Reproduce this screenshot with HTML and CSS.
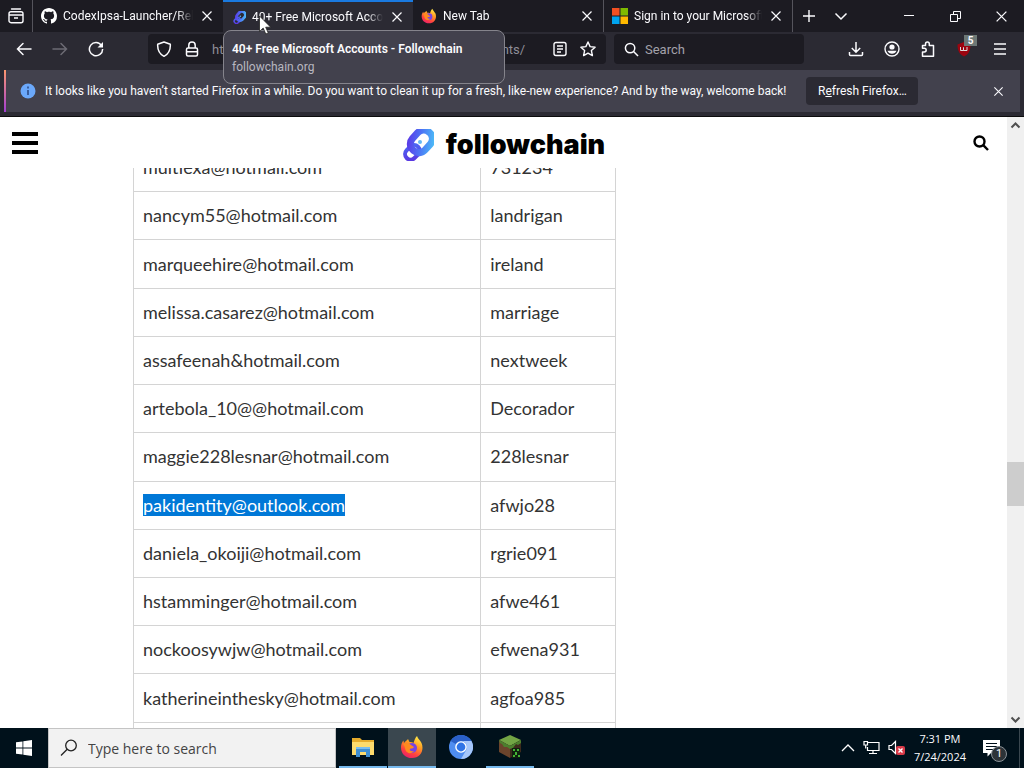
FILE: index.html
```html
<!DOCTYPE html>
<html lang="en">
<head>
    <meta charset="UTF-8">
    <meta name="viewport" content="width=device-width, initial-scale=1.0">
    <title>40+ Free Microsoft Accounts - Followchain</title>
    <link rel="stylesheet" href="styles.css">
</head>
<body>
    <!-- Shared icons -->
    <svg class="defs" width="0" height="0" aria-hidden="true">
        <defs>
            <linearGradient id="chainFill" x1="0" y1="1" x2="1" y2="0">
                <stop offset="0" stop-color="#5a35e0"/>
                <stop offset="1" stop-color="#4a6af5"/>
            </linearGradient>
            <linearGradient id="linkFill" x1="0" y1="0" x2="1" y2="1">
                <stop offset="0" stop-color="#5a3be8"/>
                <stop offset="0.5" stop-color="#4c78f5"/>
                <stop offset="1" stop-color="#4cc0f7"/>
            </linearGradient>
            <linearGradient id="foxFill" x1="0.8" y1="0" x2="0.3" y2="1">
                <stop offset="0" stop-color="#fff04a"/>
                <stop offset="0.4" stop-color="#ff9a22"/>
                <stop offset="0.75" stop-color="#ff4040"/>
                <stop offset="1" stop-color="#e8206a"/>
            </linearGradient>
            <symbol id="chain" viewBox="0 0 32 32">
                <rect x="2" y="18" width="16" height="11" rx="5.500" transform="rotate(-45 10 23)" fill="none" stroke="url(#chainFill)" stroke-width="4"/>
                <rect x="7" y="4" width="24" height="17" rx="8" transform="rotate(-48 19 12)" fill="none" stroke="url(#linkFill)" stroke-width="7"/>
                <circle cx="18" cy="13" r="2" fill="#62b8f5"/>
            </symbol>
            <symbol id="fox" viewBox="0 0 24 24">
                <path d="M17 1c1 3 3 4 4.500 7 3 7-1 15-9.500 15C5 23 .8 18 1 12c.1-3 1.200-5 2.400-6.500L4 8c1.500-2 3-2.500 4-4l1.500 3c2 0 3 0 4 1 1-3 1.500-5 3.500-7z" fill="url(#foxFill)"/>
                <circle cx="12" cy="13" r="5" fill="#7543e5"/>
                <path d="M3 9c3-1 6-1 8 1 1 1 2 1 3 2-1 2-3 1-4 2s1 3 4 2c-2 3-7 3-8.500-1C4.700 12.500 5 11 3 9z" fill="#ff8a1e"/>
            </symbol>
            <symbol id="cross" viewBox="0 0 12 12">
                <path d="M1.500 1.500l9 9M10.500 1.500l-9 9" fill="none" stroke="currentColor" stroke-width="1.200"/>
            </symbol>
        </defs>
    </svg>

    <!-- Tab strip -->
    <div class="tabs">
        <button class="tabs-view" aria-label="Firefox View">
            <svg width="16" height="16" viewBox="0 0 16 16" fill="none" stroke="currentColor" stroke-width="1.400"><path d="M3.500 1h9" stroke-linecap="round"/><rect x="1" y="3.700" width="14" height="11" rx="2"/><path d="M1 7h14M6 10h4"/></svg>
        </button>
        <div class="tab">
            <svg class="tab-icon" viewBox="0 0 16 16"><path fill="#fff" d="M8 0C3.580 0 0 3.580 0 8c0 3.540 2.290 6.530 5.470 7.590.4.070.55-.17.55-.38 0-.19-.01-.82-.01-1.490-2.010.37-2.530-.49-2.690-.94-.09-.23-.48-.94-.82-1.130-.28-.15-.68-.52-.01-.53.63-.01 1.080.58 1.230.82.72 1.210 1.870.87 2.330.66.070-.52.28-.87.51-1.070-1.780-.2-3.640-.89-3.640-3.950 0-.87.31-1.590.82-2.150-.08-.2-.36-1.020.080-2.120 0 0 .67-.21 2.200.82.64-.18 1.320-.27 2-.27s1.360.09 2 .27c1.530-1.040 2.200-.82 2.200-.82.44 1.100.16 1.920.08 2.120.51.56.82 1.270.82 2.150 0 3.070-1.870 3.750-3.650 3.950.29.25.54.73.54 1.480 0 1.070-.01 1.930-.01 2.200 0 .21.15.46.55.38A8.010 8.010 0 0 0 16 8c0-4.420-3.580-8-8-8z"/></svg>
            <span class="tab-title">CodexIpsa-Launcher/Releases</span>
            <button class="tab-close" aria-label="Close tab"><svg width="12" height="12"><use href="#cross"/></svg></button>
        </div>
        <div class="tab active">
            <svg class="tab-icon small"><use href="#chain"/></svg>
            <span class="tab-title">40+ Free Microsoft Accounts</span>
            <button class="tab-close" aria-label="Close tab"><svg width="12" height="12"><use href="#cross"/></svg></button>
        </div>
        <div class="tab">
            <svg class="tab-icon"><use href="#fox"/></svg>
            <span class="tab-title">New Tab</span>
            <button class="tab-close" aria-label="Close tab"><svg width="12" height="12"><use href="#cross"/></svg></button>
        </div>
        <div class="tab last">
            <svg class="tab-icon" viewBox="0 0 16 16"><path fill="#f25022" d="M0 0h7.500v7.500H0z"/><path fill="#7fba00" d="M8.500 0H16v7.500H8.500z"/><path fill="#00a4ef" d="M0 8.500h7.500V16H0z"/><path fill="#ffb900" d="M8.500 8.500H16V16H8.500z"/></svg>
            <span class="tab-title">Sign in to your Microsoft account</span>
            <button class="tab-close" aria-label="Close tab"><svg width="12" height="12"><use href="#cross"/></svg></button>
        </div>
        <button class="tabs-button" aria-label="New tab"><svg width="14" height="14" viewBox="0 0 14 14" stroke="currentColor" stroke-width="1.400"><path d="M7 1v12M1 7h12"/></svg></button>
        <button class="tabs-button" aria-label="List all tabs"><svg width="14" height="14" viewBox="0 0 14 14" fill="none" stroke="currentColor" stroke-width="1.500"><path d="M1.500 4.500L7 10l5.500-5.500"/></svg></button>
        <div class="window-buttons">
            <button aria-label="Minimize"><svg width="10" height="10" viewBox="0 0 10 10" stroke="currentColor"><path d="M0 4.500h10"/></svg></button>
            <button aria-label="Restore"><svg width="11" height="11" viewBox="0 0 11 11" fill="none" stroke="currentColor"><path d="M.5 3.500h7v7h-7zM3.500 3V.5h7v7H8"/></svg></button>
            <button aria-label="Close"><svg width="13" height="13"><use href="#cross"/></svg></button>
        </div>

        <!-- Tab preview, hangs over the toolbar -->
        <div class="tab-preview">
            <strong>40+ Free Microsoft Accounts - Followchain</strong>
            <span>followchain.org</span>
        </div>
        <svg class="cursor" width="13" height="20" viewBox="0 0 13 20"><path d="M.5 1v15.500l3.700-3.400 2.600 5.900 2.500-1.100-2.600-5.700h5z" fill="#fff" stroke="#222" stroke-width=".8"/></svg>
    </div>

    <!-- Navigation toolbar -->
    <div class="toolbar">
        <button aria-label="Back"><svg width="16" height="16" viewBox="0 0 16 16" fill="none" stroke="currentColor" stroke-width="1.500" stroke-linecap="round"><path d="M15 8H1.500M7 2.500L1.500 8 7 13.500"/></svg></button>
        <button class="dim" aria-label="Forward"><svg width="16" height="16" viewBox="0 0 16 16" fill="none" stroke="currentColor" stroke-width="1.500" stroke-linecap="round"><path d="M1 8h13.500M9 2.500L14.500 8 9 13.500"/></svg></button>
        <button aria-label="Reload"><svg width="16" height="16" viewBox="0 0 16 16" fill="none" stroke="currentColor" stroke-width="1.500"><path d="M13.500 4.500A6.600 6.600 0 1 0 14.600 8"/><path d="M15 1v5.500H9.500z" fill="currentColor" stroke="none"/></svg></button>
        <div class="url-box">
            <svg width="16" height="16" viewBox="0 0 16 16" fill="none" stroke="currentColor" stroke-width="1.500"><path d="M8 1l6.300 2.300c.3 5-1.300 9.400-6.300 12C3 12.700 1.400 8.300 1.700 3.300z" stroke-linejoin="round"/></svg>
            <svg width="16" height="16" viewBox="0 0 16 16" fill="none" stroke="currentColor" stroke-width="1.500"><rect x="2.500" y="7" width="11" height="8" rx="1.500"/><path d="M4.800 7V4.300a3.200 3.200 0 0 1 6.400 0V7M3 10.800h10"/></svg>
            <input type="text" aria-label="Address" value="https://www.followchain.org/free-microsoft-accounts/">
            <svg width="16" height="16" viewBox="0 0 16 16" fill="none" stroke="currentColor" stroke-width="1.400"><rect x="2" y="1.500" width="12" height="13" rx="2"/><path d="M5 5h6M5 8h6M5 11h4"/></svg>
            <svg width="16" height="16" viewBox="0 0 16 16" fill="none" stroke="currentColor" stroke-width="1.400" stroke-linejoin="round"><path d="M8 1l2.100 4.600 5 .6-3.700 3.400 1 5L8 12.100l-4.400 2.500 1-5L.9 6.200l5-.6z"/></svg>
        </div>
        <div class="search-box">
            <svg width="15" height="15" viewBox="0 0 16 16" fill="none" stroke="currentColor" stroke-width="1.600"><circle cx="6.500" cy="6.500" r="5"/><path d="M10.200 10.200L15 15"/></svg>
            <input type="text" aria-label="Search the web" placeholder="Search">
        </div>
        <div class="toolbar-actions">
            <button aria-label="Downloads"><svg width="16" height="16" viewBox="0 0 16 16" fill="none" stroke="currentColor" stroke-width="1.500"><path d="M8 1v10M3.800 7L8 11.200 12.200 7M1.500 11v2.500a1 1 0 0 0 1 1h11a1 1 0 0 0 1-1V11"/></svg></button>
            <button aria-label="Account"><svg width="16" height="16" viewBox="0 0 16 16"><circle cx="8" cy="8" r="7" fill="none" stroke="currentColor" stroke-width="1.400"/><circle cx="8" cy="6" r="2.600" fill="currentColor"/><path d="M3.500 9.800h9c-.6 2-2.400 3-4.500 3s-3.900-1-4.500-3z" fill="currentColor"/></svg></button>
            <button aria-label="Extensions"><svg width="16" height="16" viewBox="0 0 16 16" fill="none" stroke="currentColor" stroke-width="1.500" stroke-linejoin="round"><path d="M5.500 4.500V3a1.900 1.900 0 0 1 3.800 0v1.500h4.200v10.700h-11V11h1.800a1.900 1.900 0 0 0 0-3.800H2.500V4.500z"/></svg></button>
            <button class="blocker" aria-label="uBlock"><svg width="16" height="16" viewBox="0 0 16 16"><path d="M8 1l6.500 2.500c0 6-1.500 9.500-6.500 12-5-2.500-6.500-6-6.500-12z" fill="#9c0510"/><path d="M4.500 6v3.500h3V6.500v3h3.500V6" fill="none" stroke="#ddd"/></svg><span class="badge">5</span></button>
            <button aria-label="Menu"><svg width="14" height="14" viewBox="0 0 14 14" stroke="currentColor" stroke-width="1.400"><path d="M1 2h12M1 7h12M1 12h12"/></svg></button>
        </div>
    </div>

    <!-- Notification -->
    <div class="notice">
        <svg class="notice-icon" width="16" height="16" viewBox="0 0 16 16"><circle cx="8" cy="8" r="7.500" fill="#6ba8fa"/><path d="M8 7v5M8 3.500v2" stroke="#2c4a86" stroke-width="1.600"/></svg>
        <span>It looks like you haven’t started Firefox in a while. Do you want to clean it up for a fresh, like-new experience? And by the way, welcome back!</span>
        <button class="notice-action">R<u>e</u>fresh Firefox…</button>
        <button class="notice-close" aria-label="Dismiss"><svg width="11" height="11"><use href="#cross"/></svg></button>
    </div>

    <!-- Web page -->
    <div class="viewport">
        <main class="page">
            <header class="site-header">
                <button aria-label="Menu"><svg width="26" height="22" viewBox="0 0 26 22"><path d="M0 0h26v4H0zM0 9h26v4H0zM0 18h26v4H0z"/></svg></button>
                <a class="brand" href="#"><svg width="32" height="32"><use href="#chain"/></svg>followchain</a>
                <button class="site-search" aria-label="Search"><svg width="16" height="16" viewBox="0 0 16 16" fill="none" stroke="#000" stroke-width="2.400"><circle cx="6.500" cy="6.500" r="5"/><path d="M10.200 10.200L15 15"/></svg></button>
            </header>
            <div class="content">
                <table class="accounts">
                    <tbody>
                        <tr><td>multiexa@hotmail.com</td><td>731234</td></tr>
                        <tr><td>nancym55@hotmail.com</td><td>landrigan</td></tr>
                        <tr><td>marqueehire@hotmail.com</td><td>ireland</td></tr>
                        <tr><td>melissa.casarez@hotmail.com</td><td>marriage</td></tr>
                        <tr><td>assafeenah&amp;hotmail.com</td><td>nextweek</td></tr>
                        <tr><td>artebola_10@@hotmail.com</td><td>Decorador</td></tr>
                        <tr><td>maggie228lesnar@hotmail.com</td><td>228lesnar</td></tr>
                        <tr><td><mark>pakidentity@outlook.com</mark></td><td>afwjo28</td></tr>
                        <tr><td>daniela_okoiji@hotmail.com</td><td>rgrie091</td></tr>
                        <tr><td>hstamminger@hotmail.com</td><td>afwe461</td></tr>
                        <tr><td>nockoosywjw@hotmail.com</td><td>efwena931</td></tr>
                        <tr><td>katherineinthesky@hotmail.com</td><td>agfoa985</td></tr>
                        <tr><td>&nbsp;</td><td>&nbsp;</td></tr>
                    </tbody>
                </table>
            </div>
        </main>
        <div class="scrollbar">
            <svg width="17" height="17" viewBox="0 0 17 17" fill="none" stroke="#505050" stroke-width="2"><path d="M4.500 10.500l4-4 4 4"/></svg>
            <div class="track"><div class="thumb"></div></div>
            <svg width="17" height="17" viewBox="0 0 17 17" fill="none" stroke="#505050" stroke-width="2"><path d="M4.500 6.500l4 4 4-4"/></svg>
        </div>
    </div>

    <!-- Taskbar -->
    <footer class="taskbar">
        <button class="start" aria-label="Start"><svg width="16" height="16" viewBox="0 0 16 16" fill="#fff"><path d="M0 2.300L6.500 1.400v6.200H0zM7.300 1.300L16 0v7.600H7.300zM0 8.400h6.500v6.200L0 13.700zM7.300 8.400H16V16l-8.700-1.300z"/></svg></button>
        <label class="task-search">
            <svg width="18" height="18" viewBox="0 0 18 18" fill="none" stroke="#222" stroke-width="1.300"><circle cx="11" cy="6.500" r="5.300"/><path d="M7.200 10.300L1 16.500"/></svg>
            <input type="text" aria-label="Taskbar search" placeholder="Type here to search">
        </label>
        <div class="apps">
            <button class="app running" aria-label="File Explorer"><svg width="24" height="24" viewBox="0 0 24 24"><path d="M1 3h8l2 2h12v15H1z" fill="#e6ac2c"/><path d="M1 7h22v13H1z" fill="#fddb6d"/><path d="M5 12h14v10h-4v-5H9v5H5z" fill="#3f8fd2"/><path d="M5 12h14v2H5z" fill="#79bdf0"/></svg></button>
            <button class="app running current" aria-label="Firefox"><svg width="24" height="24"><use href="#fox"/></svg></button>
            <button class="app" aria-label="Chromium"><svg width="24" height="24" viewBox="0 0 24 24"><circle cx="12" cy="12" r="12" fill="#4f8df0"/><path d="M12 6h10.400A12 12 0 0 1 12 24l5.200-9A6 6 0 0 0 12 6z" fill="#a5c7fb"/><path d="M1.600 6A12 12 0 0 1 22.400 6H12a6 6 0 0 0-5.200 3z" fill="#2a60c8"/><circle cx="12" cy="12" r="5.800" fill="#fff"/><circle cx="12" cy="12" r="4.400" fill="#2f74e6"/></svg></button>
            <button class="app running" aria-label="Minecraft"><svg width="24" height="24" viewBox="0 0 24 24"><path d="M12 0l11 5-11 6L1 5z" fill="#72a545"/><path d="M1 5l11 6v12L1 17z" fill="#6b442c"/><path d="M23 5l-11 6v12l11-6z" fill="#3d2a1c"/><path d="M1 5l11 6 11-6v3l-3 2-2-1-3 4-3 1-3-2-3 0-2-3-2-1z" fill="#4c7f2e"/><path d="M14 13h8v10h-8z" fill="#10210f"/><path d="M15 14h2v2h-2zM19 14h2v2h-2zM17 17h2v3h-2zM15 20h2v2h-2zM20 20h2v2h-2z" fill="#43b535"/></svg></button>
        </div>
        <div class="tray">
            <svg width="14" height="14" viewBox="0 0 14 14" fill="none" stroke="#fff" stroke-width="1.300"><path d="M1 10l6-6 6 6"/></svg>
            <svg width="17" height="16" viewBox="0 0 17 16" fill="none" stroke="#fff" stroke-width="1.200"><path d="M5 2.500h11v8H4.500V7M10 10.500v3M6 13.500h8M1 1.500h3.500V5H1zM2.700 5v3.500"/></svg>
            <svg width="18" height="16" viewBox="0 0 18 16"><path d="M1 5.500h2.500l4-4v12l-4-4H1z" fill="none" stroke="#fff" stroke-width="1.200"/><rect x="8" y="6" width="9" height="9" rx="2" fill="#d93a48"/><path d="M10.500 8.500l4 4M14.500 8.500l-4 4" stroke="#fff" stroke-width="1.400"/></svg>
            <time class="clock" datetime="2024-07-24T19:31">7:31 PM<br>7/24/2024</time>
            <button class="alerts" aria-label="Notifications"><svg width="17" height="17" viewBox="0 0 17 17"><path d="M0 0h17v13H8l-3.500 3.500V13H0z" fill="#fff"/><path d="M3 3.500h11M3 6.500h11M3 9.500h7" stroke="#000f1a" stroke-width="1.200"/></svg><span class="alert-count">1</span></button>
        </div>
    </footer>
</body>
</html>
```
FILE: styles.css
```css
/* General Styles */
* {
    box-sizing: border-box;
}
body {
    margin: 0;
    height: 100vh;
    display: flex;
    flex-direction: column;
    overflow: hidden;
    background: #2b2a33;
    color: #fbfbfe;
    font-family: Roboto, "Open Sans", sans-serif;
    font-size: 12px;
}
button, input {
    font: inherit;
    color: inherit;
    background: none;
    border: none;
    padding: 0;
    margin: 0;
    outline: none;
}
button {
    display: flex;
    align-items: center;
    justify-content: center;
    cursor: pointer;
}
svg {
    flex: none;
}
.defs {
    position: absolute;
}

/* Tabs */
.tabs {
    position: relative;
    display: flex;
    height: 32px;
    flex: none;
    background: #1c1b22;
}
.tabs-view {
    width: 33px;
    border-right: 1px solid #55545c;
}
.tab {
    flex: 0 1 190px;
    min-width: 0;
    display: flex;
    align-items: center;
    gap: 6px;
    padding: 0 8px;
}
.tab.active {
    background: #2b2a33;
    border-top: 2px solid #1a7ae0;
    padding-left: 10px;
}
.tab.last {
    border-left: 1px solid #55545c;
    border-right: 1px solid #55545c;
}
.tab-icon {
    width: 16px;
    height: 16px;
}
.tab-icon.small {
    width: 13px;
    height: 13px;
}
.tab-title {
    flex: 1;
    white-space: nowrap;
    overflow: hidden;
    mask-image: linear-gradient(to left, transparent, #000 16px);
}
.tab-close {
    width: 16px;
    height: 16px;
}
.tabs-button {
    width: 32px;
}
.window-buttons {
    margin-left: auto;
    display: flex;
}
.window-buttons button {
    width: 46px;
}
.tab-preview {
    position: absolute;
    left: 223px;
    top: 30px;
    z-index: 10;
    width: 282px;
    height: 54px;
    padding: 9px 8px;
    display: flex;
    flex-direction: column;
    line-height: 18px;
    background: #42414d;
    border: 1px solid #85848c;
    border-radius: 8px;
}
.tab-preview strong {
    font-weight: 600;
}
.tab-preview span {
    color: #b8b7c0;
}
.cursor {
    position: absolute;
    left: 259px;
    top: 15px;
    z-index: 11;
}

/* Toolbar */
.toolbar {
    display: flex;
    align-items: center;
    height: 34px;
    margin-bottom: 4px;
    flex: none;
    padding: 0 6px;
}
.toolbar > button, .toolbar-actions button {
    width: 36px;
    height: 30px;
}
.toolbar .dim {
    color: #6c6b74;
}
.url-box, .search-box {
    height: 30px;
    min-width: 0;
    display: flex;
    align-items: center;
    gap: 12px;
    padding: 0 10px 0 8px;
    background: #1c1b22;
    border-radius: 4px;
}
.url-box {
    flex: 1;
    margin-left: 34px;
}
.search-box {
    flex: 0 1 190px;
    margin-left: 8px;
    padding-left: 10px;
    gap: 6px;
}
.url-box input, .search-box input {
    flex: 1;
    min-width: 0;
    font-size: 13px;
    color: #8f8e97;
}
.search-box input::placeholder {
    color: #a3a2aa;
}
.toolbar-actions {
    display: flex;
    margin-left: 34px;
}
.blocker {
    position: relative;
}
.badge {
    position: absolute;
    right: 5px;
    top: 1px;
    width: 13px;
    height: 11px;
    background: #6d7876;
    font-size: 10px;
    line-height: 11px;
    font-weight: 700;
}

/* Notification */
.notice {
    display: flex;
    align-items: center;
    height: 42px;
    flex: none;
    margin: 0 4px 4px;
    padding: 0 14px;
    background: #42414d;
    border-left: 2px solid;
    border-image: linear-gradient(#ff9a6b, #a03bd6) 1;
    white-space: nowrap;
}
.notice-icon {
    margin-right: 9px;
}
.notice-action {
    display: block;
    width: 112px;
    height: 28px;
    margin-left: 20px;
    background: #2b2a33;
    border-radius: 4px;
}
.notice-close {
    width: 16px;
    height: 16px;
    margin-left: auto;
}

/* Web page */
.viewport {
    flex: 1;
    min-height: 0;
    display: flex;
    border-top: 1px solid #0c0c0d;
    background: #fff;
}
.page {
    flex: 1;
    display: flex;
    flex-direction: column;
}
.site-header {
    display: flex;
    align-items: center;
    justify-content: space-between;
    height: 51px;
    flex: none;
    padding: 0 18px 0 12px;
}
.site-search {
    width: 26px;
    justify-content: flex-end;
}
.brand {
    display: flex;
    align-items: center;
    gap: 12px;
    padding: 4px 0 0 6px;
    color: #000;
    font-family: Inter, sans-serif;
    font-size: 27px;
    font-weight: 900;
    text-decoration: none;
}
.content {
    flex: 1;
    min-height: 0;
    overflow: hidden;
}
.accounts {
    width: 48%;
    height: 628px;
    margin: -25px 0 0 133px;
    border-collapse: collapse;
    color: #333;
    font-family: Lato, sans-serif;
    font-size: 18px;
    line-height: 27px;
}
.accounts td {
    border: 1px solid #d4d4d4;
    padding: 10px 9px;
}
.accounts td:first-child {
    width: 72%;
}
.accounts mark {
    background: #0078d7;
    color: #fff;
}
.scrollbar {
    width: 17px;
    display: flex;
    flex-direction: column;
    background: #f0f0f0;
}
.track {
    flex: 1;
    display: flex;
    flex-direction: column;
    justify-content: flex-end;
    padding-bottom: 205px;
}
.thumb {
    height: 44px;
    background: #cdcdcd;
}

/* Taskbar */
.taskbar {
    display: flex;
    height: 40px;
    flex: none;
    background: #00111b;
}
.start {
    width: 48px;
}
.task-search {
    flex: 0 1 288px;
    display: flex;
    align-items: center;
    gap: 10px;
    padding-left: 11px;
    background: #f2f2f2;
    border: 1px solid #c4c4c4;
}
.task-search input {
    flex: 1;
    min-width: 0;
    font-family: "Open Sans", sans-serif;
    font-size: 14px;
}
.task-search input::placeholder {
    color: #444;
}
.apps {
    display: flex;
    gap: 1px;
    margin-left: 3px;
}
.app {
    width: 48px;
    border-bottom: 2px solid transparent;
    background-clip: padding-box;
}
.app.running {
    border-bottom-color: #76b9ed;
}
.app.current {
    background: #3a474f;
}
.tray {
    margin-left: auto;
    display: flex;
    align-items: center;
    gap: 8px;
}
.clock {
    font-family: "Open Sans", sans-serif;
    font-size: 11px;
    line-height: 18px;
    text-align: center;
}
.alerts {
    position: relative;
    justify-content: flex-start;
    width: 46px;
    height: 40px;
    margin-right: 4px;
    padding-left: 9px;
    border-right: 1px solid #3a474f;
}
.alert-count {
    position: absolute;
    left: 17px;
    top: 18px;
    width: 16px;
    height: 16px;
    border: 1px solid #8a9298;
    border-radius: 50%;
    background: #2c3338;
    font-size: 11px;
    line-height: 14px;
}
```
